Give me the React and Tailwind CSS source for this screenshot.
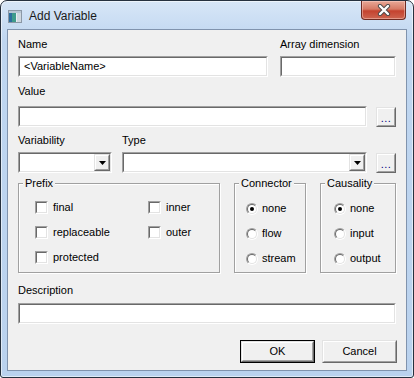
import React from "react";

function Field({ className = "", children }) {
  return (
    <div className={"h-[21px] border border-t-[#a0a0a0] border-l-[#a0a0a0] border-b-white border-r-white " + className}>
      <div className="flex h-full items-center border border-t-[#696969] border-l-[#696969] border-b-[#e3e3e3] border-r-[#e3e3e3] bg-white">
        {children}
      </div>
    </div>
  );
}

function Raised({ className = "", children }) {
  return (
    <div className={"border border-t-[#e3e3e3] border-l-[#e3e3e3] border-b-[#696969] border-r-[#696969] " + className}>
      <div className="flex h-full items-center justify-center border border-t-white border-l-white border-b-[#a0a0a0] border-r-[#a0a0a0] bg-[#f0f0f0]">
        {children}
      </div>
    </div>
  );
}

function Select({ className = "" }) {
  return (
    <Field className={className}>
      <div className="flex-1" />
      <Raised className="h-[17px] w-[16px]">
        <svg width="7" height="4" viewBox="0 0 7 4">
          <path d="M0 0h7L3.5 4z" fill="#000" />
        </svg>
      </Raised>
    </Field>
  );
}

function Dots() {
  return (
    <Raised className="h-[20px] w-[20px] shrink-0">
      <span className="pt-[3px] text-[11px] leading-none tracking-[0.5px] text-[#000080]">...</span>
    </Raised>
  );
}

function Check({ label }) {
  return (
    <div className="flex h-[13px] items-center gap-[5px]">
      <div className="h-[13px] w-[13px] border border-t-[#a0a0a0] border-l-[#a0a0a0] border-b-white border-r-white">
        <div className="h-full border border-t-[#696969] border-l-[#696969] border-b-[#e3e3e3] border-r-[#e3e3e3] bg-white" />
      </div>
      <span>{label}</span>
    </div>
  );
}

function Radio({ label, on }) {
  return (
    <div className="flex h-[13px] items-center gap-[4px]">
      <div className="h-[12px] w-[12px] rounded-full border border-t-[#a0a0a0] border-l-[#a0a0a0] border-b-white border-r-white">
        <div className="flex h-full items-center justify-center rounded-full border border-t-[#696969] border-l-[#696969] border-b-[#e3e3e3] border-r-[#e3e3e3] bg-white">
          {on && <div className="h-[4px] w-[4px] rounded-full bg-black" />}
        </div>
      </div>
      <span>{label}</span>
    </div>
  );
}

function Group({ title, className = "", children }) {
  return (
    <fieldset className={"h-[96px] border border-[#a0a0a0] shadow-[inset_1px_1px_0_#fff,1px_1px_0_#fff] " + className}>
      <legend className="ml-[4px] bg-[#f0f0f0] px-[2px] leading-[13px]">{title}</legend>
      {children}
    </fieldset>
  );
}

export default function App() {
  return (
    <div className="h-[378px] w-[414px] bg-white font-['Liberation_Sans',Arial,sans-serif] text-[11px] leading-[13px] text-black">
      <div className="flex h-full flex-col rounded-t-[7px] rounded-b-[3px] border border-[#26313f] bg-[linear-gradient(to_bottom,#d7e6f7,#bfd6f0_40px,#bad2ee)] shadow-[inset_0_0_0_1px_rgba(255,255,255,0.55)]">
        {/* title bar */}
        <div className="flex h-[28px] shrink-0 items-start">
          <div className="ml-[7px] mt-[8px] flex items-center gap-[7px]">
            <svg width="14" height="13" viewBox="0 0 14 13">
              <rect x="0.5" y="0.5" width="13" height="12" fill="#e9eef3" stroke="#8b98a6" />
              <rect x="1" y="3" width="7" height="9" fill="#3f9b8c" />
              <rect x="1" y="3" width="3" height="9" fill="#2e6f9e" />
              <rect x="9" y="3" width="4" height="9" fill="#cfd8e0" />
              <rect x="1" y="1" width="12" height="2" fill="#b8c6d4" />
            </svg>
            <span className="text-[12px] leading-[14px] text-[#1a1a1a]">Add Variable</span>
          </div>
          <div className="flex-1" />
          <div className="mr-[7px] flex h-[19px] w-[45px] items-center justify-center rounded-b-[4px] border border-t-0 border-[#6e2b22] bg-[linear-gradient(to_bottom,#e8a897,#d67a65_45%,#c4432f_55%,#cd6550)] shadow-[inset_0_0_0_1px_rgba(255,220,210,0.45)]">
            <svg width="14" height="12" viewBox="0 0 14 12">
              <path d="M3 2l8 8M11 2l-8 8" stroke="#4a4a4a" strokeWidth="4.2" strokeLinecap="round" />
              <path d="M3 2l8 8M11 2l-8 8" stroke="#fff" strokeWidth="2.4" strokeLinecap="round" />
            </svg>
          </div>
        </div>

        {/* client */}
        <div className="mx-[6px] mb-[6px] flex-1 border border-[#8093ad] bg-[#f0f0f0]">
          <div className="ml-[10px] flex w-[378px] flex-col">
            <div className="mt-[8px] flex gap-[12px]">
              <div className="flex w-[250px] flex-col gap-[5px]">
                <span>Name</span>
                <Field>
                  <span className="pl-[4px]">&lt;VariableName&gt;</span>
                </Field>
              </div>
              <div className="flex w-[116px] flex-col gap-[5px]">
                <span>Array dimension</span>
                <Field />
              </div>
            </div>

            <span className="mt-[8px]">Value</span>
            <div className="mt-[8px] flex items-center gap-[9px]">
              <Field className="flex-1" />
              <Dots />
            </div>

            <div className="mt-[7px] flex">
              <span className="w-[104px]">Variability</span>
              <span>Type</span>
            </div>
            <div className="mt-[5px] flex items-center">
              <Select className="w-[94px]" />
              <Select className="ml-[10px] w-[245px]" />
              <div className="ml-[9px]">
                <Dots />
              </div>
            </div>

            <div className="mt-[4px] flex gap-[14px]">
              <Group title="Prefix" className="w-[202px]">
                <div className="grid grid-cols-[113px_1fr] gap-y-[12px] pl-[16px] pt-[11px]">
                  <Check label="final" />
                  <Check label="inner" />
                  <Check label="replaceable" />
                  <Check label="outer" />
                  <Check label="protected" />
                </div>
              </Group>
              <Group title="Connector" className="w-[72px]">
                <div className="flex flex-col gap-[12px] pl-[11px] pt-[12px]">
                  <Radio label="none" on />
                  <Radio label="flow" />
                  <Radio label="stream" />
                </div>
              </Group>
              <Group title="Causality" className="w-[76px]">
                <div className="flex flex-col gap-[12px] pl-[13px] pt-[12px]">
                  <Radio label="none" on />
                  <Radio label="input" />
                  <Radio label="output" />
                </div>
              </Group>
            </div>

            <span className="mt-[11px]">Description</span>
            <Field className="mt-[6px]" />

            <div className="mr-[-1px] mt-[16px] flex justify-end gap-[7px]">
              <div className="h-[23px] w-[75px] border border-black">
                <Raised className="h-full">
                  <span>OK</span>
                </Raised>
              </div>
              <Raised className="h-[23px] w-[75px]">
                <span>Cancel</span>
              </Raised>
            </div>
          </div>
        </div>
      </div>
    </div>
  );
}
